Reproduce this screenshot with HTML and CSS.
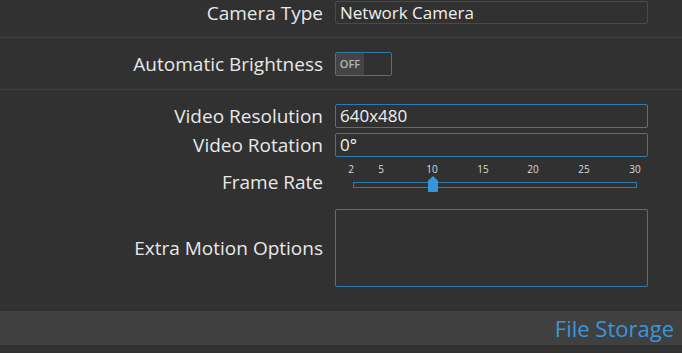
FILE: index.html
```html
<!DOCTYPE html>
<html>
<head>
<meta charset="utf-8">
<link rel="stylesheet" href="styles.css">
</head>
<body>
<div class="page">
  <div class="row row-first">
    <div class="label">Camera Type</div>
    <div class="control"><div class="input">Network Camera</div></div>
  </div>
  <div class="sep"></div>
  <div class="row row-toggle">
    <div class="label">Automatic Brightness</div>
    <div class="control"><div class="toggle"><span class="toggle-off">OFF</span></div></div>
  </div>
  <div class="sep"></div>
  <div class="group">
    <div class="row row-tight">
      <div class="label">Video Resolution</div>
      <div class="control"><div class="input focus">640x480</div></div>
    </div>
    <div class="row row-tight">
      <div class="label">Video Rotation</div>
      <div class="control"><div class="input focus">0°</div></div>
    </div>
    <div class="row row-slider">
      <div class="label">Frame Rate</div>
      <div class="control">
        <div class="slider">
          <div class="ticks">
            <span style="left:3px">2</span>
            <span style="left:33px">5</span>
            <span style="left:84px">10</span>
            <span style="left:135px">15</span>
            <span style="left:185px">20</span>
            <span style="left:236px">25</span>
            <span style="left:287px">30</span>
          </div>
          <div class="track"><div class="thumb" style="left:74px"></div></div>
        </div>
      </div>
    </div>
    <div class="row row-area">
      <div class="label">Extra Motion Options</div>
      <div class="control"><div class="textarea"></div></div>
    </div>
  </div>
  <div class="section-bar">File Storage</div>
</div>
</body>
</html>
```
FILE: styles.css
```css
html, body {
  margin: 0;
  padding: 0;
  background: #313131;
}
body {
  font-family: "Open Sans", "Noto Sans", sans-serif;
  color: #e6e6e6;
  width: 682px;
  height: 353px;
  overflow: hidden;
}
.page {
  display: flex;
  flex-direction: column;
}
.row {
  display: grid;
  grid-template-columns: 323px 313px;
  column-gap: 12px;
  align-items: center;
}
.label {
  text-align: right;
  font-size: 19px;
  line-height: 22px;
  color: #e8e8e8;
}
.row-first {
  padding-top: 1px;
  height: 23px;
  margin-bottom: 13px;
}
.sep {
  height: 1px;
  background: #3f3f3f;
}
.row-toggle {
  margin-top: 14px;
  margin-bottom: 13px;
}
.input {
  box-sizing: border-box;
  height: 23px;
  border: 1px solid #4a4a4a;
  border-radius: 2px;
  padding: 0 4px;
  font-size: 17px;
  line-height: 21px;
  color: #f0f0f0;
}
.input.focus {
  height: 24px;
  line-height: 22px;
  border-color: #2e7bb0;
}
.toggle {
  box-sizing: border-box;
  width: 57px;
  height: 24px;
  border: 1px solid #2e7bb0;
  border-radius: 2px;
  display: flex;
}
.toggle-off {
  width: 28px;
  background: #444444;
  color: #b5b5b5;
  font-size: 11px;
  font-weight: 600;
  line-height: 22px;
  text-align: center;
}
.group {
  padding-top: 14px;
  display: flex;
  flex-direction: column;
}
.row-tight {
  margin-bottom: 5px;
}
.row-tight + .row-tight {
  margin-bottom: 0;
}
.row-slider {
  height: 52px;
  align-items: start;
}
.row-slider .label {
  margin-top: 14px;
}
.slider {
  position: relative;
  height: 52px;
}
.ticks {
  position: relative;
  height: 20px;
  margin-top: 5px;
}
.ticks span {
  position: absolute;
  top: 0;
  font-size: 10px;
  line-height: 14px;
  color: #dcdcdc;
  transform: translateX(-50%);
  margin-left: 13px;
}
.track {
  position: relative;
  box-sizing: border-box;
  margin-left: 18px;
  width: 284px;
  height: 6px;
  border: 1px solid #2e7bb0;
}
.thumb {
  position: absolute;
  top: -7px;
  width: 10px;
  height: 16px;
  background: #3497dd;
  clip-path: polygon(0 30%, 50% 0, 100% 30%, 100% 100%, 0 100%);
  border-radius: 0 0 1px 1px;
}
.row-area .textarea {
  box-sizing: border-box;
  height: 78px;
  border: 1px solid #2e7bb0;
  border-radius: 2px;
}
.section-bar {
  margin-top: 24px;
  height: 34px;
  background: #404040;
  color: #3a96dd;
  font-size: 22px;
  line-height: 34px;
  text-align: right;
  padding-right: 8px;
}
```
